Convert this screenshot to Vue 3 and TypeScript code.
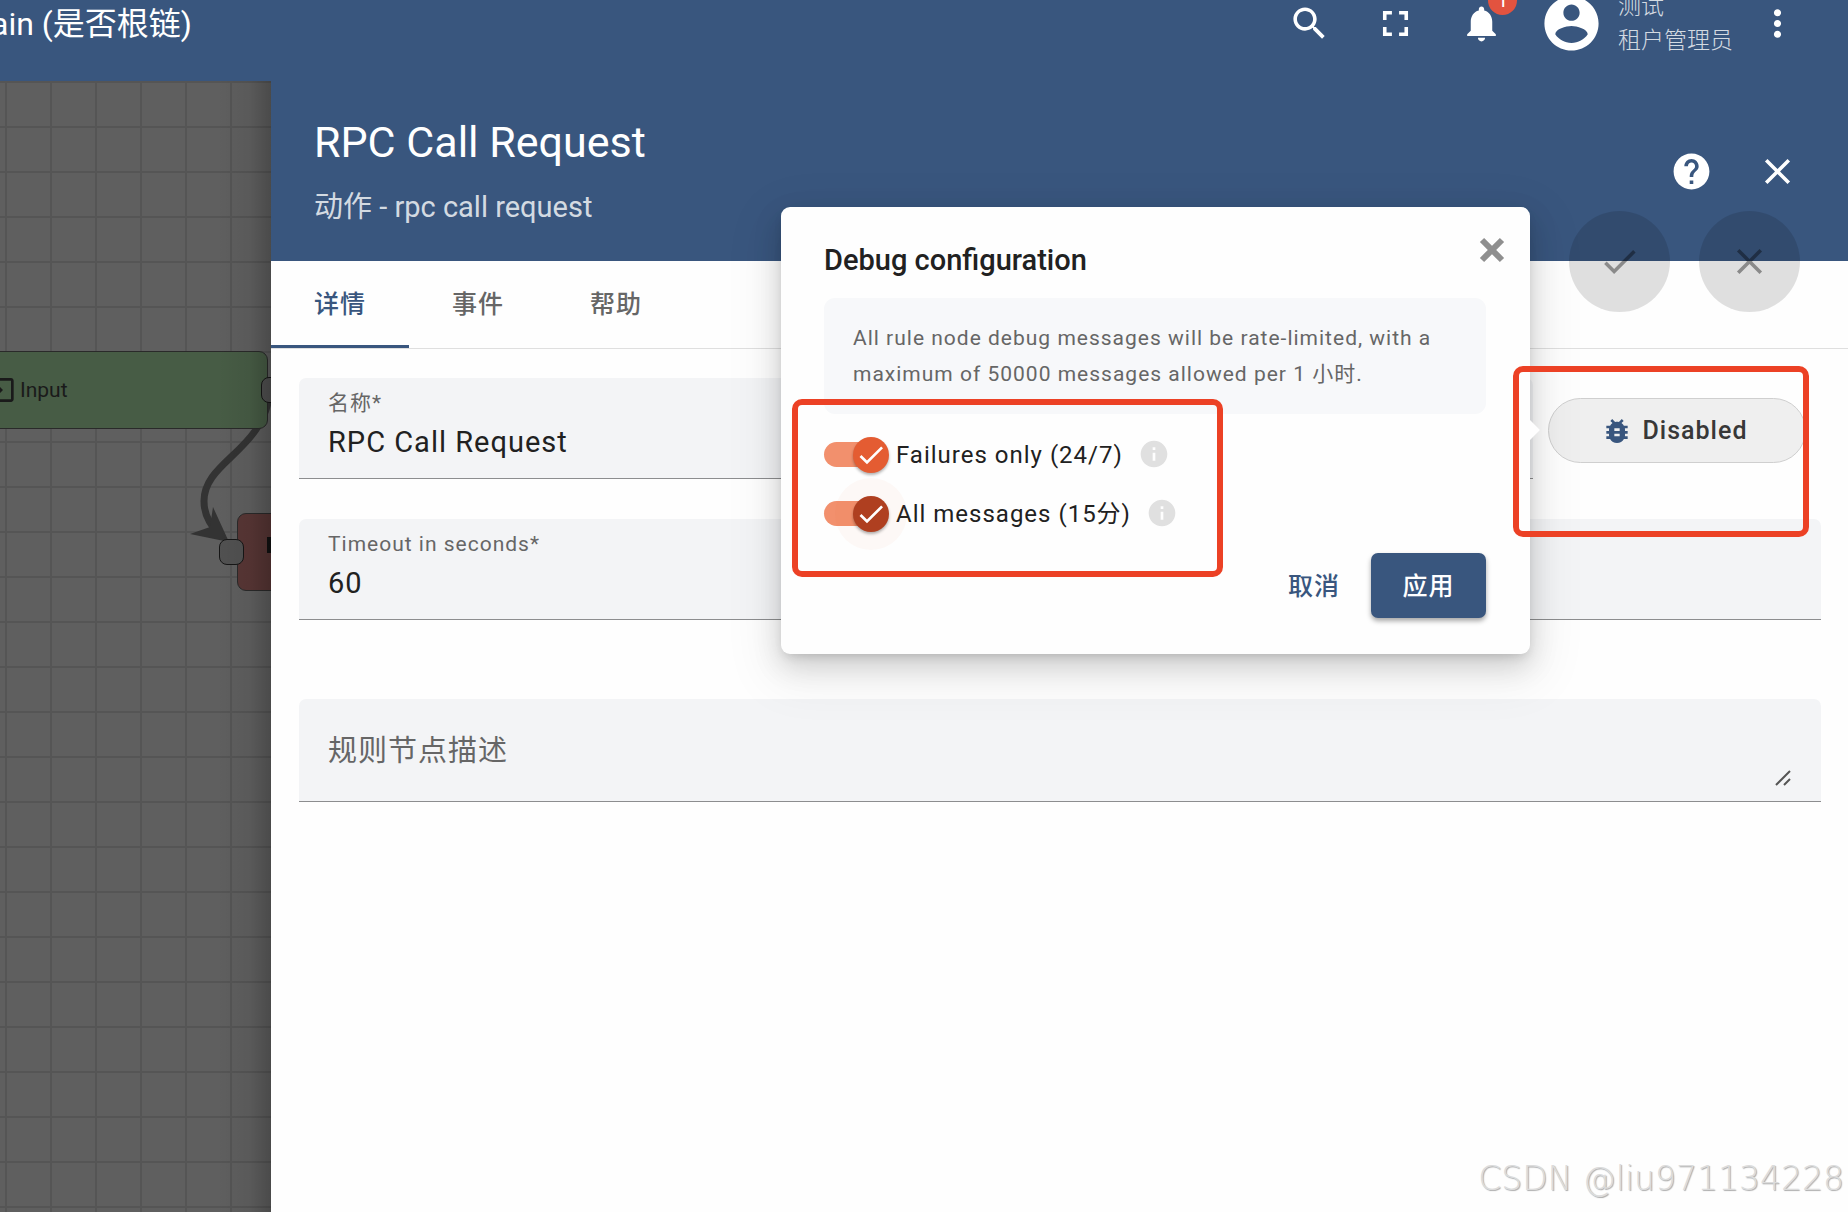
<script setup lang="ts">
import { ref } from 'vue'

interface Tab {
  id: string
  label: string
}

const tabs: Tab[] = [
  { id: 'details', label: '详情' },
  { id: 'events', label: '事件' },
  { id: 'help', label: '帮助' },
]
const activeTab = ref('details')
const nodeName = ref('RPC Call Request')
const timeout = ref('60')
const description = ref('')
const failuresOnly = ref(true)
const allMessages = ref(true)

const closePath =
  'M19 6.41 17.59 5 12 10.59 6.41 5 5 6.41 10.59 12 5 17.59 6.41 19 12 13.41 17.59 19 19 17.59 13.41 12z'
const checkPath = 'M9 16.17 4.83 12l-1.42 1.41L9 19 21 7l-1.41-1.41z'
const infoPath =
  'M12 2C6.48 2 2 6.48 2 12s4.48 10 10 10 10-4.48 10-10S17.52 2 12 2zm1 15h-2v-6h2v6zm0-8h-2V7h2v2z'
</script>

<template>
  <div class="page">
    <header class="topbar">
      <div class="toolbar">
        <h1 class="crumb">ain (是否根链)</h1>
        <button class="icon-btn" aria-label="search">
          <svg class="icon" viewBox="0 0 24 24"><path d="M15.5 14h-.79l-.28-.27C15.41 12.59 16 11.11 16 9.5 16 5.91 13.09 3 9.5 3S3 5.91 3 9.5 5.91 16 9.5 16c1.61 0 3.09-.59 4.23-1.57l.27.28v.79l5 4.99L20.49 19l-4.99-5zm-6 0C7.01 14 5 11.99 5 9.5S7.01 5 9.5 5 14 7.01 14 9.5 11.99 14 9.5 14z" /></svg>
        </button>
        <button class="icon-btn" aria-label="fullscreen">
          <svg class="icon" viewBox="0 0 24 24"><path d="M7 14H5v5h5v-2H7v-3zm-2-4h2V7h3V5H5v5zm12 7h-3v2h5v-5h-2v3zM14 5v2h3v3h2V5h-5z" /></svg>
        </button>
        <button class="icon-btn" aria-label="notifications">
          <svg class="icon" viewBox="0 0 24 24"><path d="M12 22c1.1 0 2-.9 2-2h-4c0 1.1.89 2 2 2zm6-6v-5c0-3.07-1.64-5.64-4.5-6.32V4c0-.83-.67-1.5-1.5-1.5s-1.5.67-1.5 1.5v.68C7.63 5.36 6 7.92 6 11v5l-2 2v1h16v-1l-2-2z" /></svg>
          <span class="badge">1</span>
        </button>
        <div class="user">
          <svg class="avatar" viewBox="0 0 24 24"><path d="M12 2C6.48 2 2 6.48 2 12s4.48 10 10 10 10-4.48 10-10S17.52 2 12 2zm0 3c1.66 0 3 1.34 3 3s-1.34 3-3 3-3-1.34-3-3 1.34-3 3-3zm0 14.2c-2.5 0-4.71-1.28-6-3.22.03-1.99 4-3.08 6-3.08 1.99 0 5.97 1.09 6 3.08-1.29 1.94-3.5 3.22-6 3.22z" /></svg>
          <div class="user-text">
            <span class="user-name">测试</span>
            <span class="user-role">租户管理员</span>
          </div>
        </div>
        <button class="icon-btn" aria-label="more">
          <svg class="icon" viewBox="0 0 24 24"><path d="M12 8c1.1 0 2-.9 2-2s-.9-2-2-2-2 .9-2 2 .9 2 2 2zm0 2c-1.1 0-2 .9-2 2s.9 2 2 2 2-.9 2-2-.9-2-2-2zm0 6c-1.1 0-2 .9-2 2s.9 2 2 2 2-.9 2-2-.9-2-2-2z" /></svg>
        </button>
      </div>
    </header>

    <div class="body">
      <aside class="canvas">
        <svg class="link" viewBox="0 0 271 520" width="271" height="520">
          <path d="M270 310C264 370 204 380 204 420C204 436 212 446 222 456" />
          <polygon points="229,461 213,426 210,446 190,453" />
        </svg>
        <div class="node node-input">
          <svg class="node-icon" viewBox="0 0 24 24"><path d="M21 3.01H3c-1.1 0-2 .9-2 2V9h2V4.99h18v14.03H3V15H1v4.01c0 1.1.9 1.98 2 1.98h18c1.1 0 2-.88 2-1.98v-14c0-1.11-.9-2-2-2zM11 16l4-4-4-4v3H1v2h10v3z" /></svg>
          <span>Input</span>
        </div>
        <div class="node node-rpc"><i class="node-mark"></i></div>
        <i class="port port-out"></i>
        <i class="port port-in"></i>
      </aside>

      <section class="panel">
        <header class="panel-head">
          <div class="panel-titles">
            <h2>RPC Call Request</h2>
            <p>动作 - rpc call request</p>
          </div>
          <button class="icon-btn" aria-label="help">
            <svg class="icon" viewBox="0 0 24 24"><path d="M12 2C6.48 2 2 6.48 2 12s4.48 10 10 10 10-4.48 10-10S17.52 2 12 2zm1 17h-2v-2h2v2zm2.07-7.75-.9.92C13.45 12.9 13 13.5 13 15h-2v-.5c0-1.1.45-2.1 1.17-2.83l1.24-1.26c.37-.36.59-.86.59-1.41 0-1.1-.9-2-2-2s-2 .9-2 2H8c0-2.21 1.79-4 4-4s4 1.79 4 4c0 .88-.36 1.68-.93 2.25z" /></svg>
          </button>
          <button class="icon-btn" aria-label="close">
            <svg class="icon" viewBox="0 0 24 24"><path :d="closePath" /></svg>
          </button>
          <div class="fabs">
            <button class="fab" disabled aria-label="apply changes">
              <svg class="icon" viewBox="0 0 24 24"><path :d="checkPath" /></svg>
            </button>
            <button class="fab" disabled aria-label="decline changes">
              <svg class="icon" viewBox="0 0 24 24"><path :d="closePath" /></svg>
            </button>
          </div>
        </header>

        <nav class="tabs" role="tablist">
          <button
            v-for="tab in tabs"
            :key="tab.id"
            role="tab"
            class="tab"
            :class="{ active: tab.id === activeTab }"
            @click="activeTab = tab.id"
          >{{ tab.label }}</button>
        </nav>

        <form class="form" @submit.prevent>
          <div class="row">
            <div class="field">
              <label for="node-name">名称*</label>
              <input id="node-name" v-model="nodeName" type="text" />
            </div>
            <div class="debug">
              <button type="button" class="debug-btn">
                <svg class="bug" viewBox="0 0 24 24"><path d="M20 8h-2.81c-.45-.78-1.07-1.45-1.82-1.96L17 4.41 15.59 3l-2.17 2.17C12.96 5.06 12.49 5 12 5s-.96.06-1.41.17L8.41 3 7 4.41l1.62 1.63C7.88 6.55 7.26 7.22 6.81 8H4v2h2.09c-.05.33-.09.66-.09 1v1H4v2h2v1c0 .34.04.67.09 1H4v2h2.81c1.04 1.79 2.97 3 5.19 3s4.15-1.21 5.19-3H20v-2h-2.09c.05-.33.09-.66.09-1v-1h2v-2h-2v-1c0-.34-.04-.67-.09-1H20V8zm-6 8h-4v-2h4v2zm0-4h-4v-2h4v2z" /></svg>
                Disabled
              </button>

              <div class="popover" role="dialog" aria-label="Debug configuration">
                <div class="pop-head">
                  <h3>Debug configuration</h3>
                  <button type="button" class="pop-close" aria-label="close">
                    <svg viewBox="0 0 26 26"><path d="M3 3 23 23M23 3 3 23" /></svg>
                  </button>
                </div>
                <p class="hint">All rule node debug messages will be rate-limited, with a maximum of 50000 messages allowed per 1 小时.</p>
                <div class="toggles">
                  <div class="toggle">
                    <label>
                      <span class="switch">
                        <input v-model="failuresOnly" type="checkbox" />
                        <span class="thumb"><svg viewBox="0 0 24 24"><path :d="checkPath" /></svg></span>
                      </span>
                      <span class="toggle-text">Failures only (24/7)</span>
                    </label>
                    <svg class="info" viewBox="0 0 24 24"><path :d="infoPath" /></svg>
                  </div>
                  <div class="toggle focused">
                    <label>
                      <span class="switch">
                        <input v-model="allMessages" type="checkbox" />
                        <span class="thumb"><svg viewBox="0 0 24 24"><path :d="checkPath" /></svg></span>
                      </span>
                      <span class="toggle-text">All messages (15分)</span>
                    </label>
                    <svg class="info" viewBox="0 0 24 24"><path :d="infoPath" /></svg>
                  </div>
                </div>
                <div class="actions">
                  <button type="button" class="btn">取消</button>
                  <button type="button" class="btn primary">应用</button>
                </div>
                <span class="mark mark-toggles"></span>
              </div>
              <span class="mark mark-debug"></span>
            </div>
          </div>

          <div class="field">
            <label for="node-timeout">Timeout in seconds*</label>
            <input id="node-timeout" v-model="timeout" type="text" />
          </div>

          <div class="field area">
            <textarea v-model="description" rows="1" placeholder="规则节点描述" aria-label="规则节点描述"></textarea>
            <svg class="grip" viewBox="0 0 16 16"><path d="M1 15 15 1M9 15 15 9" /></svg>
          </div>
        </form>
      </section>
    </div>
    <div class="watermark">CSDN @liu971134228</div>
  </div>
</template>

<style>
body {
  margin: 0;
}
</style>

<style scoped>
.page {
  --blue: #39567e;
  position: relative;
  display: flex;
  flex-direction: column;
  min-height: 100vh;
  overflow: hidden;
  background: #fefefe;
  color: #212121;
  font-family: Roboto, "Noto Sans CJK SC", sans-serif;
}
.page *,
.page *::before,
.page *::after {
  box-sizing: border-box;
}
h1, h2, h3, p {
  margin: 0;
  font-weight: 400;
}
button {
  border: 0;
  padding: 0;
  background: none;
  font-family: inherit;
  color: inherit;
}
svg {
  display: block;
  fill: currentColor;
}
.icon {
  width: 43px;
  height: 43px;
}
.icon-btn {
  position: relative;
  display: flex;
  flex: none;
  align-items: center;
  justify-content: center;
  width: 86px;
  height: 86px;
  color: #fff;
}

.topbar {
  height: 81px;
  background: var(--blue);
  color: #fff;
}
.toolbar {
  display: flex;
  align-items: center;
  height: 114px;
  margin-top: -34px;
  padding-right: 28px;
}
.crumb {
  flex: 1;
  margin-left: -9px;
  padding-top: 2px;
  font-size: 32px;
  line-height: 40px;
  white-space: nowrap;
}
.badge {
  position: absolute;
  top: 6px;
  left: 50px;
  width: 29px;
  height: 29px;
  border-radius: 50%;
  background: #e2533f;
  font-size: 20px;
  line-height: 29px;
  text-align: center;
}
.user {
  display: flex;
  align-items: center;
  gap: 14px;
  padding-left: 15px;
}
.avatar {
  width: 65px;
  height: 65px;
}
.user-text {
  display: flex;
  flex-direction: column;
  width: 116px;
  padding-top: 2px;
  font-size: 23px;
  font-weight: 300;
  line-height: 34px;
  color: rgba(255, 255, 255, 0.8);
}

.body {
  display: flex;
  flex: 1;
}

/* Rule chain canvas, dimmed behind the panel */
.canvas {
  position: relative;
  flex: none;
  width: 271px;
  overflow: hidden;
  background-color: #5f5f5f;
  background-image:
    linear-gradient(90deg, #555 2px, transparent 2px),
    linear-gradient(#555 2px, transparent 2px);
  background-size: 45px 45px;
  background-position: 5px 0;
}
.canvas::after {
  content: "";
  position: absolute;
  inset: 0 0 0 auto;
  width: 54px;
  background: linear-gradient(90deg, rgba(0, 0, 0, 0), rgba(0, 0, 0, 0.06) 60%, rgba(0, 0, 0, 0.22));
}
.link {
  position: absolute;
  top: 0;
  left: 0;
}
.link path {
  fill: none;
  stroke: #333;
  stroke-width: 7;
}
.link polygon {
  fill: #333;
}
.node {
  position: absolute;
  display: flex;
  align-items: center;
  height: 78px;
  border: 1px solid #2a2a2a;
  border-radius: 9px;
  font-size: 21px;
  color: #1a1a1a;
}
.node-input {
  top: 270px;
  left: -80px;
  width: 348px;
  padding-left: 62px;
  gap: 5px;
  background: #475c45;
}
.node-icon {
  width: 32px;
  height: 32px;
}
.node-rpc {
  top: 432px;
  left: 237px;
  width: 340px;
  background: #583635;
}
.node-mark {
  width: 20px;
  height: 16px;
  margin: -14px 0 0 29px;
  background: #111;
}
.port {
  position: absolute;
  width: 25px;
  height: 26px;
  border: 1px solid #161616;
  border-radius: 8px;
  background: #515151;
}
.port-out {
  top: 296px;
  left: 261px;
}
.port-in {
  top: 458px;
  left: 219px;
}

/* Details panel */
.panel {
  flex: 1;
  min-width: 0;
  background: #fefefe;
}
.panel-head {
  position: relative;
  display: flex;
  align-items: center;
  height: 180px;
  padding: 0 28px 0 43px;
  background: var(--blue);
  color: #fff;
}
.panel-titles {
  flex: 1;
  padding-bottom: 2px;
}
.panel-head h2 {
  font-size: 43px;
  line-height: 54px;
}
.panel-head p {
  margin-top: 20px;
  font-size: 29px;
  line-height: 36px;
  color: rgba(255, 255, 255, 0.8);
}
.fabs {
  position: absolute;
  right: 48px;
  bottom: -51px;
  display: flex;
  gap: 29px;
}
.fab {
  display: flex;
  align-items: center;
  justify-content: center;
  width: 101px;
  height: 101px;
  border-radius: 50%;
  background: rgba(0, 0, 0, 0.12);
  color: rgba(0, 0, 0, 0.38);
}
.tabs {
  display: flex;
  height: 88px;
  border-bottom: 1px solid #dfdfdf;
}
.tab {
  height: 87px;
  padding: 0 43px 2px;
  border-bottom: 3px solid transparent;
  font-size: 25px;
  font-weight: 500;
  letter-spacing: 1px;
  color: #666;
}
.tab.active {
  border-color: var(--blue);
  color: var(--blue);
}

.form {
  display: flex;
  flex-direction: column;
  gap: 40px;
  padding: 29px 27px 29px 28px;
}
.row {
  display: flex;
  align-items: flex-start;
  gap: 15px;
  padding-right: 15px;
}
.field {
  position: relative;
  display: flex;
  flex: 1;
  flex-direction: column;
  min-height: 101px;
  padding: 12px 29px 0;
  border-bottom: 1px solid #8c8d8f;
  border-radius: 7px 7px 0 0;
  background: #f3f4f6;
}
.field label {
  font-size: 21px;
  line-height: 26px;
  letter-spacing: 1px;
  color: #666;
}
.field input,
.field textarea {
  width: 100%;
  border: 0;
  padding: 0;
  outline: 0;
  background: none;
  font-family: inherit;
  font-size: 29px;
  line-height: 40px;
  letter-spacing: 1px;
  color: #212121;
}
.field input {
  height: 40px;
  margin-top: 6px;
}
.field.area {
  min-height: 103px;
  margin-top: 39px;
  padding-top: 32px;
}
.field textarea {
  height: 56px;
  resize: none;
}
.field textarea::placeholder {
  color: #666;
}
.grip {
  position: absolute;
  right: 30px;
  bottom: 15px;
  width: 16px;
  height: 16px;
  fill: none;
  stroke: #555;
  stroke-width: 2;
}

/* Debug button with its popover */
.debug {
  position: relative;
  z-index: 2;
  margin-top: 20px;
}
.debug-btn {
  display: flex;
  align-items: center;
  justify-content: center;
  gap: 10px;
  width: 258px;
  height: 65px;
  padding-right: 6px;
  border: 1px solid #cfcfcf;
  border-radius: 33px;
  background: #efefef;
  font-size: 25px;
  font-weight: 500;
  letter-spacing: 1px;
  color: #383838;
}
.bug {
  width: 32px;
  height: 32px;
  color: var(--blue);
}
.popover {
  position: absolute;
  top: -191px;
  right: calc(100% + 18px);
  width: 749px;
  padding: 29px 44px 36px 43px;
  border-radius: 9px;
  background: #fefefe;
  box-shadow:
    0 5px 11px -4px rgba(0, 0, 0, 0.16),
    0 11px 29px rgba(0, 0, 0, 0.16),
    0 16px 50px 14px rgba(0, 0, 0, 0.06);
}
.popover::after {
  content: "";
  position: absolute;
  top: 216px;
  right: -7px;
  width: 14px;
  height: 14px;
  background: #fefefe;
  transform: rotate(45deg);
}
.pop-head {
  display: flex;
  align-items: center;
  justify-content: space-between;
  height: 48px;
}
.pop-head h3 {
  font-size: 29px;
  font-weight: 500;
}
.pop-close {
  width: 26px;
  height: 26px;
  margin: -20px -19px 0 0;
}
.pop-close svg {
  fill: none;
  stroke: #8f8f8f;
  stroke-width: 6;
}
.hint {
  margin-top: 14px;
  padding: 22px 29px;
  border-radius: 11px;
  background: #f7f8fa;
  font-size: 21px;
  line-height: 36px;
  letter-spacing: 1px;
  color: #666;
}
.toggles {
  padding-top: 11px;
}
.toggle {
  display: flex;
  align-items: center;
  gap: 15px;
  height: 59px;
}
.toggle label {
  display: flex;
  align-items: center;
  gap: 7px;
}
.toggle-text {
  font-size: 24px;
  line-height: 32px;
  letter-spacing: 1px;
}
.switch {
  position: relative;
  display: flex;
  align-items: center;
  width: 65px;
  height: 36px;
}
.switch input {
  appearance: none;
  width: 58px;
  height: 25px;
  margin: 0;
  border-radius: 13px;
  background: #f2906d;
}
.thumb {
  position: absolute;
  top: 0;
  right: 0;
  width: 36px;
  height: 36px;
  padding: 2px;
  border-radius: 50%;
  background: #e45c32;
  color: #fff;
  box-shadow: 0 2px 3px rgba(0, 0, 0, 0.3);
}
.focused .thumb {
  background: #af3f20;
  box-shadow:
    0 2px 3px rgba(0, 0, 0, 0.3),
    0 0 0 18px rgba(228, 92, 50, 0.04);
}
.info {
  width: 32px;
  height: 32px;
  margin-bottom: 2px;
  color: #e0e0e0;
}
.actions {
  display: flex;
  justify-content: flex-end;
  gap: 9px;
  margin-top: 10px;
}
.btn {
  height: 65px;
  padding: 0 22px 3px;
  border-radius: 7px;
  font-size: 25px;
  font-weight: 500;
  letter-spacing: 1px;
  color: var(--blue);
}
.btn.primary {
  width: 115px;
  background: var(--blue);
  color: #fff;
  box-shadow: 0 3px 5px rgba(0, 0, 0, 0.35);
}
.mark {
  position: absolute;
  z-index: 3;
  border: 6px solid #ec4125;
  border-radius: 10px;
  pointer-events: none;
}
.mark-toggles {
  top: 192px;
  left: 11px;
  width: 431px;
  height: 178px;
}
.mark-debug {
  inset: -32px -3px -74px -35px;
}
.watermark {
  position: absolute;
  right: 4px;
  bottom: 13px;
  font-family: "DejaVu Sans", sans-serif;
  font-size: 33px;
  font-weight: 200;
  line-height: 40px;
  color: #dcdcdc;
  text-shadow: 1px 1px 1px #aaa;
}
</style>
